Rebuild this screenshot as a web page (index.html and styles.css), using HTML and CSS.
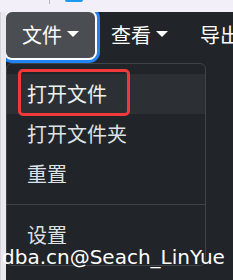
FILE: index.html
```html
<!DOCTYPE html>
<html lang="zh">
<head>
<meta charset="utf-8">
<link rel="stylesheet" href="styles.css">
</head>
<body>
<div class="top"><span class="tick"></span><span class="pill"></span></div>
<div class="main">
  <div class="side"></div>
  <div class="app">
    <nav class="nav">
      <button class="nav-item active">文件<span class="caret"></span></button>
      <button class="nav-item">查看<span class="caret"></span></button>
      <button class="nav-item">导出</button>
    </nav>
    <ul class="menu">
      <li class="item hover">打开文件</li>
      <li class="item">打开文件夹</li>
      <li class="item">重置</li>
      <li class="divider"></li>
      <li class="item">设置</li>
    </ul>
  </div>
</div>
<div class="mark"></div>
<div class="watermark">dba.cn@Seach_LinYue</div>
</body>
</html>
```

FILE: styles.css
```css
html, body {
  margin: 0;
  padding: 0;
}
body {
  width: 233px;
  height: 280px;
  overflow: hidden;
  background: #f2eef7;
  font-family: "Noto Sans", "Noto Sans CJK SC", sans-serif;
  position: relative;
}
.top {
  height: 12px;
  position: relative;
  background: #f3eff8;
}
.tick {
  position: absolute;
  left: 49px;
  top: 0;
  width: 1px;
  height: 4px;
  background: #b9b6bd;
}
.pill {
  position: absolute;
  left: 65px;
  top: 0;
  width: 18px;
  height: 2px;
  border-radius: 0 0 3px 3px;
  background: #1b9af0;
}
.main {
  display: flex;
  height: 268px;
}
.side {
  width: 6px;
  background: #ebe8f0;
  border-left: 1px solid #d6d3da;
  box-sizing: border-box;
}
.app {
  flex: 1;
  position: relative;
  overflow: hidden;
  background: #212428;
}
.nav {
  display: flex;
  height: 46px;
}
.nav-item {
  display: flex;
  align-items: center;
  padding: 0 16px;
  border: 0;
  background: transparent;
  color: #ffffff;
  font-family: "Noto Sans CJK SC", sans-serif;
  font-size: 20px;
  line-height: 1;
  white-space: nowrap;
}
.nav-item.active {
  width: 89px;
  background: #4a4d51;
  border-radius: 6px;
  box-shadow: 0 0 0 2px #ffffff, 0 0 0 5px #2383f2;
  position: relative;
  z-index: 1;
}
.caret {
  display: inline-block;
  width: 0;
  height: 0;
  margin-left: 5px;
  margin-bottom: 2px;
  border-top: 6px solid #ffffff;
  border-left: 6px solid transparent;
  border-right: 6px solid transparent;
}
.menu {
  position: absolute;
  left: 0;
  top: 51px;
  width: 200px;
  box-sizing: border-box;
  margin: 0;
  padding: 10px 0;
  list-style: none;
  background: #212428;
  border: 1px solid #404448;
  border-radius: 6px;
  z-index: 2;
}
.item {
  height: 40px;
  line-height: 40px;
  padding-left: 20px;
  color: #dee2e6;
  font-family: "Noto Sans CJK SC", sans-serif;
  font-size: 20px;
}
.item.hover {
  background: #2c3034;
  color: #eef0f2;
}
.divider {
  height: 1px;
  margin: 10px 0;
  background: #404448;
}
.mark {
  position: absolute;
  left: 18px;
  top: 69px;
  width: 112px;
  height: 47px;
  box-sizing: border-box;
  border: 3px solid #f03a3a;
  border-radius: 5px;
  z-index: 3;
}
.watermark {
  position: absolute;
  left: 2px;
  top: 247px;
  line-height: 20px;
  font-size: 20px;
  font-family: "DejaVu Sans", sans-serif;
  color: #ffffff;
  white-space: nowrap;
  z-index: 4;
}
```
